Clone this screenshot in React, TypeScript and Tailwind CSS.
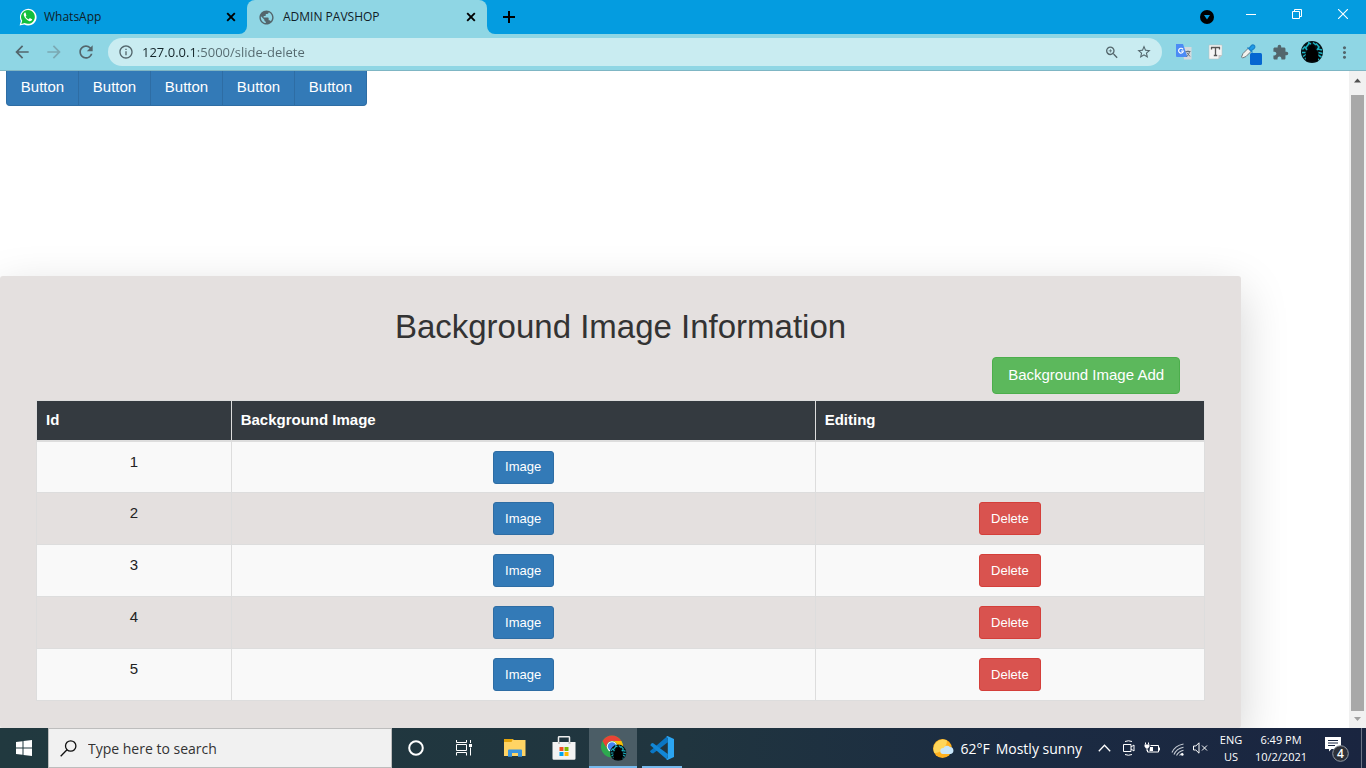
import type { ReactNode } from "react";
import {
  MdArrowBack,
  MdArrowForward,
  MdExtension,
  MdInfoOutline,
  MdMoreVert,
  MdPublic,
  MdRefresh,
  MdStarBorder,
  MdZoomIn,
} from "react-icons/md";

const rows = [1, 2, 3, 4, 5];
const groupButtons = [1, 2, 3, 4, 5];

function WhatsAppIcon() {
  return (
    <svg viewBox="0 0 18 18" className="size-[18px] shrink-0" aria-hidden="true">
      <path d="M0.6 17.6 1.9 13A8.3 8.3 0 1 1 5.2 16.4Z" fill="#fff" />
      <path d="M2.3 15.9 3.2 12.8A6.9 6.9 0 1 1 5.6 15Z" fill="#12bf3d" />
      <path
        d="M6.6 4.8c-.3-.3-.8-.2-1 0-.8.8-1.1 1.8-.6 3 .9 2.400 2.500 4.100 4.900 5.100 1.300.5 2.300.2 3-.6.3-.4.3-.9.2-1.100l-1.900-1c-.3-.1-.5-.1-.7.1l-.7.9c-.2.2-.3.2-.6.1-1.100-.5-1.900-1.300-2.500-2.300-.1-.3 0-.4.1-.6l.5-.6c.1-.2.100-.4 0-.6Z"
        fill="#fff"
      />
    </svg>
  );
}

function CrossIcon() {
  return (
    <svg viewBox="0 0 10 10" className="size-2.5" stroke="#000" strokeWidth="1.900" aria-hidden="true">
      <path d="M1.200 1.200 8.800 8.800M8.800 1.200 1.200 8.800" />
    </svg>
  );
}

function AvatarArt() {
  return (
    <>
      <circle cx="11" cy="11" r="11" fill="#041014" />
      <path
        d="M1.500 8.500 4 5.500M4.500 7 8 2.500M1 11.500h3.500M2 15.500l3-2M7 1.500l3 1.500M12 1.500l3 2.500M15 2.500l3.500 4M17 8l4 1M17.500 11.500l4 1M17 14l3.500 2M4 6l2 3M18 6l-2 3M4 18l2-2M16 17l2 2"
        stroke="#1bb2c0"
        strokeWidth="1.500"
        fill="none"
      />
      <path d="M11 4c-2 0-3.500 2-3.500 4.500C5.500 10 4.500 13 4.500 16.500l1 4h11l1-4c0-3.500-1-6.500-3-8C14.500 6 13 4 11 4Z" fill="#000" />
    </>
  );
}

function ChromeLogo() {
  return (
    <svg viewBox="0 0 26 26" className="size-[26px]" aria-hidden="true">
      <circle cx="11" cy="11.500" r="11" fill="#2da94f" />
      <path d="M1.500 6A11 11 0 0 1 20.500 6H11A5.500 5.500 0 0 0 6.200 14.200Z" fill="#ea4335" />
      <path d="M11 6H20.500A11 11 0 0 1 11 22.500L15.800 14.200A5.500 5.500 0 0 0 11 6Z" fill="#fbbc05" />
      <circle cx="11" cy="11.500" r="5.200" fill="#fff" />
      <circle cx="11" cy="11.500" r="4.200" fill="#4285f4" />
      <g transform="translate(9 9.500) scale(0.74)">
        <AvatarArt />
      </g>
    </svg>
  );
}

function CodeLogo() {
  return (
    <svg viewBox="0 0 24 24" className="size-6" aria-hidden="true">
      <path d="M17.500 0 17.800 6.300 3.200 17.500 1.300 17 .2 15.600.4 14.800Z" fill="#0a76c4" />
      <path d="M.3 9.200 1.300 7.600 2.900 7 17.800 18 17.500 24Z" fill="#1287d6" />
      <path d="M17.500 0 24 2.900V21.100L17.500 24 16.400 23.500 17.800 22V2L16.400.6Z" fill="#2ba5f2" />
    </svg>
  );
}

function IconButton({ label, className = "", children }: { label: string; className?: string; children: ReactNode }) {
  return (
    <button type="button" aria-label={label} className={`flex shrink-0 items-center justify-center ${className}`}>
      {children}
    </button>
  );
}

function TabStrip() {
  return (
    <header className="flex h-[34px] shrink-0 bg-[#8fd6e4] text-[12px] text-[#102027]">
      <div className="flex w-[247px] shrink-0 items-center rounded-br-lg bg-[#049ce0] pr-2 pl-[19px]">
        <WhatsAppIcon />
        <span className="ml-[7px] flex-1">WhatsApp</span>
        <IconButton label="Close WhatsApp tab" className="size-4">
          <CrossIcon />
        </IconButton>
      </div>
      <div className="flex w-60 shrink-0 bg-[linear-gradient(#049ce0_50%,#8fd6e4_50%)]">
        <div className="flex flex-1 items-center rounded-t-lg bg-[#8fd6e4] pr-2 pl-[11px]">
          <MdPublic size={17} color="#53666c" />
          <span className="ml-2 flex-1">ADMIN PAVSHOP</span>
          <IconButton label="Close ADMIN PAVSHOP tab" className="size-4">
            <CrossIcon />
          </IconButton>
        </div>
      </div>
      <div className="flex flex-1 items-center rounded-bl-lg bg-[#049ce0]">
        <IconButton label="New tab" className="ml-3 size-5">
          <svg viewBox="0 0 12 12" className="size-3" stroke="#000" strokeWidth="2">
            <path d="M6 0v12M0 6h12" />
          </svg>
        </IconButton>
        <div className="flex-1" />
        <IconButton label="Search tabs" className="mr-[13px] size-4">
          <svg viewBox="0 0 14 14" className="size-3.5">
            <circle cx="7" cy="7" r="7" fill="#000" />
            <path d="M4 5h6L7 9.500Z" fill="#049ce0" />
          </svg>
        </IconButton>
        <IconButton label="Minimize" className="w-[46px] pb-1.5">
          <svg viewBox="0 0 10 10" className="size-2.5" stroke="#fff">
            <path d="M0 5.500h10" />
          </svg>
        </IconButton>
        <IconButton label="Restore" className="w-[46px] pb-1.5">
          <svg viewBox="0 0 10 10" className="size-2.5" stroke="#fff" fill="none">
            <path d="M.5 2.500h7v7h-7zM2.500 2.500v-2h7v7h-2" />
          </svg>
        </IconButton>
        <IconButton label="Close window" className="w-[46px] pb-1.5">
          <svg viewBox="0 0 10 10" className="size-2.5" stroke="#fff" strokeWidth="1.100">
            <path d="M0 0 10 10M10 0 0 10" />
          </svg>
        </IconButton>
      </div>
    </header>
  );
}

function Toolbar() {
  return (
    <div className="flex h-[37px] shrink-0 items-center border-b border-[#7fb6c4] bg-[#8fd6e4] pl-3 text-[#53666c]">
      <IconButton label="Back" className="size-5">
        <MdArrowBack size={20} />
      </IconButton>
      <IconButton label="Forward" className="ml-3 size-5 text-[#7ba9b3]">
        <MdArrowForward size={20} />
      </IconButton>
      <IconButton label="Reload" className="ml-3 size-5">
        <MdRefresh size={20} />
      </IconButton>
      <div className="ml-3 flex h-7 flex-1 items-center rounded-full bg-[#c9ecf1] pr-2.5 pl-2.5">
        <MdInfoOutline size={16} />
        <input
          aria-label="Address"
          defaultValue="127.0.0.1:5000/slide-delete"
          className="ml-2 min-w-0 flex-1 bg-[linear-gradient(90deg,#14252a_54px,#53686e_54px)] bg-clip-text pt-px text-[13px] text-transparent outline-none"
        />
        <IconButton label="Zoom" className="mr-4 size-4">
          <MdZoomIn size={17} />
        </IconButton>
        <IconButton label="Bookmark this page" className="size-4">
          <MdStarBorder size={18} />
        </IconButton>
      </div>
      <div className="ml-3.5 flex items-center">
        <IconButton label="Translate" className="size-4">
          <svg viewBox="0 0 16 16" className="size-4">
            <path d="M6 3h9.500v12.500H8Z" fill="#d5d9dd" />
            <path d="M0 0h7l4.500 13H1a1 1 0 0 1-1-1Z" fill="#4b8bf5" />
            <path d="M7 5.300A2.400 2.400 0 1 0 7.400 7H5" stroke="#fff" strokeWidth="1.200" fill="none" />
            <path d="M9.500 7.500h5M12 6.500v1M10.500 12.500c1.500-1 2.500-2.500 3-5M10.800 8.500l3.200 4" stroke="#65727c" fill="none" />
          </svg>
        </IconButton>
        <IconButton label="Text tool" className="ml-4 size-4">
          <svg viewBox="0 0 16 16" className="size-4">
            <path d="M1 1h13v10l-3.500 4H1Z" fill="#f5f5f5" stroke="#b6c2c5" strokeWidth=".6" />
            <path d="M14 11l-3.500 4v-4Z" fill="#c3c3c3" />
            <path d="M3.500 5.500v-2h8v2M7.500 3.500v8M5.800 11.500h3.400" stroke="#555" strokeWidth="1.300" fill="none" />
          </svg>
        </IconButton>
        <IconButton label="Color picker" className="ml-4 h-[22px] w-[22px] pt-1">
          <svg viewBox="0 0 22 22" className="size-[22px]">
            <path d="M1.500 14 3 10.500 8.500 5l3 3L6 13.500 2.500 15Z" fill="#f2f2ee" stroke="#6f7b7f" />
            <path d="M7.500 4.500 12.500 9.500M9 5.500l2.500-3a1.800 1.800 0 0 1 2.800 2.700L11 8Z" fill="#1e9be8" stroke="#1d83c9" strokeWidth="1.200" />
            <rect x="10" y="10" width="12" height="12" rx="1.500" fill="#0566d1" />
          </svg>
        </IconButton>
        <IconButton label="Extensions" className="ml-[9px] size-[18px]">
          <MdExtension size={17} />
        </IconButton>
        <IconButton label="Profile" className="ml-3 size-[22px]">
          <svg viewBox="0 0 22 22" className="size-[22px]">
            <AvatarArt />
          </svg>
        </IconButton>
        <IconButton label="Menu" className="mr-3 ml-[11px] size-5">
          <MdMoreVert size={19} />
        </IconButton>
      </div>
    </div>
  );
}

function ImageTable() {
  const cell = "border border-[#ddd] px-2 pt-[9px] align-top";
  return (
    <table className="w-full table-fixed border-collapse text-[15px] leading-5">
      <colgroup>
        <col className="w-1/6" />
        <col className="w-1/2" />
        <col className="w-1/3" />
      </colgroup>
      <thead className="bg-[#343a40] text-left text-white">
        <tr className="h-10">
          {["Id", "Background Image", "Editing"].map((name) => (
            <th key={name} className="border border-b-2 border-[#ddd] px-[9px] font-bold">
              {name}
            </th>
          ))}
        </tr>
      </thead>
      <tbody className="text-center">
        {rows.map((id) => (
          <tr key={id} className="h-[52px] odd:bg-[#f9f9f9]">
            <td className={`${cell} text-[#222]`}>
              <span className="block pt-px">{id}</span>
            </td>
            <td className={cell}>
              <button type="button" className="mx-auto block h-[33px] w-[61px] rounded-[3px] border border-[#2e6da4] bg-[#337ab7] text-[13px] text-white">
                Image
              </button>
            </td>
            <td className={cell}>
              {id > 1 && (
                <button type="button" className="mx-auto block h-[33px] w-[62px] rounded-[3px] border border-[#d43f3a] bg-[#d9534f] text-[13px] text-white">
                  Delete
                </button>
              )}
            </td>
          </tr>
        ))}
      </tbody>
    </table>
  );
}

function PageContent() {
  return (
    <main className="flex min-w-0 flex-1 flex-col overflow-hidden bg-white font-['Liberation_Sans',Arial,sans-serif] text-[#333]">
      <div className="flex h-[205px] shrink-0 items-start pl-1.5">
        {groupButtons.map((n) => (
          <button
            key={n}
            type="button"
            className="-mr-px h-[35px] w-[73px] border border-t-0 border-[#2e6da4] bg-[#337ab7] pb-0.5 text-[15px] text-white first:rounded-bl last:rounded-br"
          >
            Button
          </button>
        ))}
      </div>
      <section className="w-[92%] flex-1 rounded-[3px] bg-[#e4e0df] px-9 pt-[33px] shadow-[0_16px_48px_rgba(0,0,0,0.18)]">
        <h1 className="text-center text-[33px] leading-9">Background Image Information</h1>
        <div className="mt-3 mb-1.5 flex justify-end pr-[25px]">
          <button type="button" className="h-[37px] rounded border border-[#4cae4c] bg-[#5cb85c] px-[15px] text-[15px] text-white">
            Background Image Add
          </button>
        </div>
        <ImageTable />
      </section>
    </main>
  );
}

function ScrollBar() {
  return (
    <div className="flex w-[17px] shrink-0 flex-col items-center bg-[#f1f1f1]">
      <svg viewBox="0 0 17 17" className="mt-1 mb-[3px] size-[17px]" aria-hidden="true">
        <path d="M5 7.500h7L8.500 3.500Z" fill="#505050" />
      </svg>
      <div className="w-[13px] flex-1 bg-[#a8a8a8]" />
      <svg viewBox="0 0 17 17" className="size-[17px]" aria-hidden="true">
        <path d="M5 6h7l-3.500 4Z" fill="#a0a0a0" />
      </svg>
    </div>
  );
}

function Taskbar() {
  return (
    <footer className="flex h-10 shrink-0 bg-[linear-gradient(90deg,#21393f,#20353f_50%,#1b2b42_75%,#1a2540)] text-white">
      <IconButton label="Start" className="w-12">
        <svg viewBox="0 0 16 16" className="size-4" fill="#fff">
          <path d="M0 2 6.500 1.200V7.500H0ZM7.500 1 16 0V7.500H7.500ZM0 8.500H6.500V14.800L0 14ZM7.500 8.500H16V16L7.500 15Z" />
        </svg>
      </IconButton>
      <label className="flex w-[344px] shrink-0 items-center border border-[#bdbdbd] bg-[#f1f1f1] pl-[11px]">
        <svg viewBox="0 0 17 17" className="size-[17px]" fill="none" stroke="#111" strokeWidth="1.300">
          <circle cx="10.700" cy="6" r="5.200" />
          <path d="M7 9.700.7 16.300" />
        </svg>
        <input
          aria-label="Search"
          placeholder="Type here to search"
          className="ml-[11px] min-w-0 flex-1 bg-transparent text-[14px] text-[#333] outline-none placeholder:text-[#333]"
        />
      </label>
      <IconButton label="Cortana" className="w-12">
        <svg viewBox="0 0 16 16" className="size-4">
          <circle cx="8" cy="8" r="6.800" stroke="#fff" strokeWidth="2" fill="none" />
        </svg>
      </IconButton>
      <IconButton label="Task view" className="w-12">
        <svg viewBox="0 0 16 16" className="size-4" stroke="#fff" fill="none">
          <path d="M.5 0v2.500h10V0M.5 4.500h10v6H.5zM.5 15.500v-3h10v3M14.500 0v3M14.500 7.500v8" />
          <path d="M13 4h3v3h-3z" fill="#fff" stroke="none" />
        </svg>
      </IconButton>
      <IconButton label="File Explorer" className="ml-[3px] w-12">
        <svg viewBox="0 0 22 18" className="h-[18px] w-[22px]">
          <path d="M0 0h8.500l1.500 1h11.500v16H0Z" fill="#ffd464" />
          <path d="M0 0h9l-1.500 3H0Z" fill="#e5a50b" />
          <path d="M4 17.800V11.500a1 1 0 0 1 1-1h12a1 1 0 0 1 1 1v6.300h-4V14H8v3.800Z" fill="#3a94dd" />
        </svg>
      </IconButton>
      <IconButton label="Microsoft Store" className="ml-px w-12">
        <svg viewBox="0 0 24 24" className="size-6">
          <path d="M6.500 7V1.500A.8.8 0 0 1 7.300.7h9.400a.8.8 0 0 1 .8.8V7" fill="none" stroke="#eee" strokeWidth="1.500" />
          <path d="M.5 6h23v16.500a1.300 1.300 0 0 1-1.300 1.300H1.800A1.300 1.300 0 0 1 .5 22.500Z" fill="#f3f3f3" />
          <path d="M6 6h2v2H6zM16.500 6h2v2h-2z" fill="#c6c6c6" />
          <path d="M7.500 11h4v4h-4z" fill="#f25022" />
          <path d="M12.500 11h4v4h-4z" fill="#7fba00" />
          <path d="M7.500 16h4v4h-4z" fill="#00a4ef" />
          <path d="M12.500 16h4v4h-4z" fill="#ffb900" />
        </svg>
      </IconButton>
      <IconButton label="Google Chrome" className="ml-px w-12 border-b-2 border-[#76b9ed] bg-[#4b5d66] pt-0.5 pl-px">
        <ChromeLogo />
      </IconButton>
      <IconButton label="Visual Studio Code" className="ml-[5px] w-10 border-b-2 border-[#76b9ed] pt-0.5">
        <CodeLogo />
      </IconButton>
      <div className="flex-1" />
      <button type="button" className="flex items-center text-[14px] whitespace-nowrap">
        <svg viewBox="0 0 21 19" className="h-[19px] w-[21px]" aria-hidden="true">
          <circle cx="9.500" cy="9.500" r="9.400" fill="#ffb01f" />
          <path d="M1.500 14A9.400 9.400 0 0 1 14 1.500 13 13 0 0 1 1.500 14Z" fill="#ffd65a" />
          <path d="M10 15a3 3 0 0 1 .5-6 4 4 0 0 1 6.500-1 3.600 3.600 0 0 1 1 7Z" fill="#c9e6fa" />
        </svg>
        <span className="ml-1.5">62°F</span>
        <span className="ml-1.5">Mostly sunny</span>
      </button>
      <div className="ml-3.5 flex items-center">
        <IconButton label="Show hidden icons" className="w-4">
          <svg viewBox="0 0 13 8" className="h-2 w-[13px]" fill="none" stroke="#fff" strokeWidth="1.300">
            <path d="m.8 7.200 5.700-6 5.700 6" />
          </svg>
        </IconButton>
        <IconButton label="Meet Now" className="ml-2.5 w-3.5">
          <svg viewBox="0 0 12 16" className="h-4 w-3" fill="none" stroke="#fff">
            <path d="M2 1.500q3.500-1.500 7 0M2 14.500q3.500 1.500 7 0M.5 4.500h7.500v7H.5zM8 7l3-2v6L8 9" />
          </svg>
        </IconButton>
        <IconButton label="Battery" className="ml-2 w-4">
          <svg viewBox="0 0 16 12" className="h-3 w-4" fill="none" stroke="#fff">
            <path d="M6.500 3.500h8v6.500h-11V8M15.500 5.500v3M1.500.5v2M4.500.5v2M3 6.500V9" />
            <path d="M.5 2.500h5v2l-1.500 2H2l-1.500-2zM6 5h3v4H5.500z" fill="#fff" stroke="none" />
          </svg>
        </IconButton>
        <IconButton label="Network" className="ml-2.5 w-3.5">
          <svg viewBox="0 0 13 13" className="mt-0.5 size-[13px]" fill="none" stroke="#c8ced6" strokeWidth="1.100">
            <path d="M1 9.500Q4 2.500 12.500 1M3 11.500Q5.500 5.500 12.500 4.200M5.500 12.500Q7.500 8.500 12.500 7.300M8.500 12.500Q10 10.500 12 10.200" />
            <circle cx="11.300" cy="11.500" r="1.300" fill="#fff" stroke="none" />
          </svg>
        </IconButton>
        <IconButton label="Volume muted" className="ml-2 w-4">
          <svg viewBox="0 0 15 12" className="h-3 w-[15px]" fill="none" stroke="#fff">
            <path d="M.5 4h2.300L6 .8v10.400L2.800 8H.5zM9 3.500 14 8.500M14 3.500 9 8.500" />
          </svg>
        </IconButton>
      </div>
      <button type="button" className="ml-[5px] w-9 pb-px text-center text-[11px] leading-[17px]">
        ENG
        <br />
        US
      </button>
      <button type="button" className="w-16 pb-px text-center text-[11px] leading-[17px] whitespace-nowrap">
        6:49 PM
        <br />
        10/2/2021
      </button>
      <IconButton label="4 notifications" className="ml-2.5 w-7">
        <svg viewBox="0 0 26 26" className="mt-1 size-[26px]">
          <path d="M1 0h16v12H7.500L5 14.500V12H1Z" fill="#fff" />
          <path d="M4 3.500h10M4 6h10M4 8.500h7" stroke="#1a2742" />
          <circle cx="16.500" cy="16.500" r="7.800" fill="#2d3038" stroke="#929aa3" />
          <text x="16.500" y="21" textAnchor="middle" fontSize="12" fontWeight="600" fill="#fff">
            4
          </text>
        </svg>
      </IconButton>
      <div className="mr-1 ml-2.5 w-px bg-[#6c7486]" />
    </footer>
  );
}

export default function App() {
  return (
    <div className="flex h-screen flex-col overflow-hidden font-['Open_Sans','Noto_Sans',sans-serif]">
      <TabStrip />
      <Toolbar />
      <div className="flex min-h-0 flex-1">
        <PageContent />
        <ScrollBar />
      </div>
      <Taskbar />
    </div>
  );
}
